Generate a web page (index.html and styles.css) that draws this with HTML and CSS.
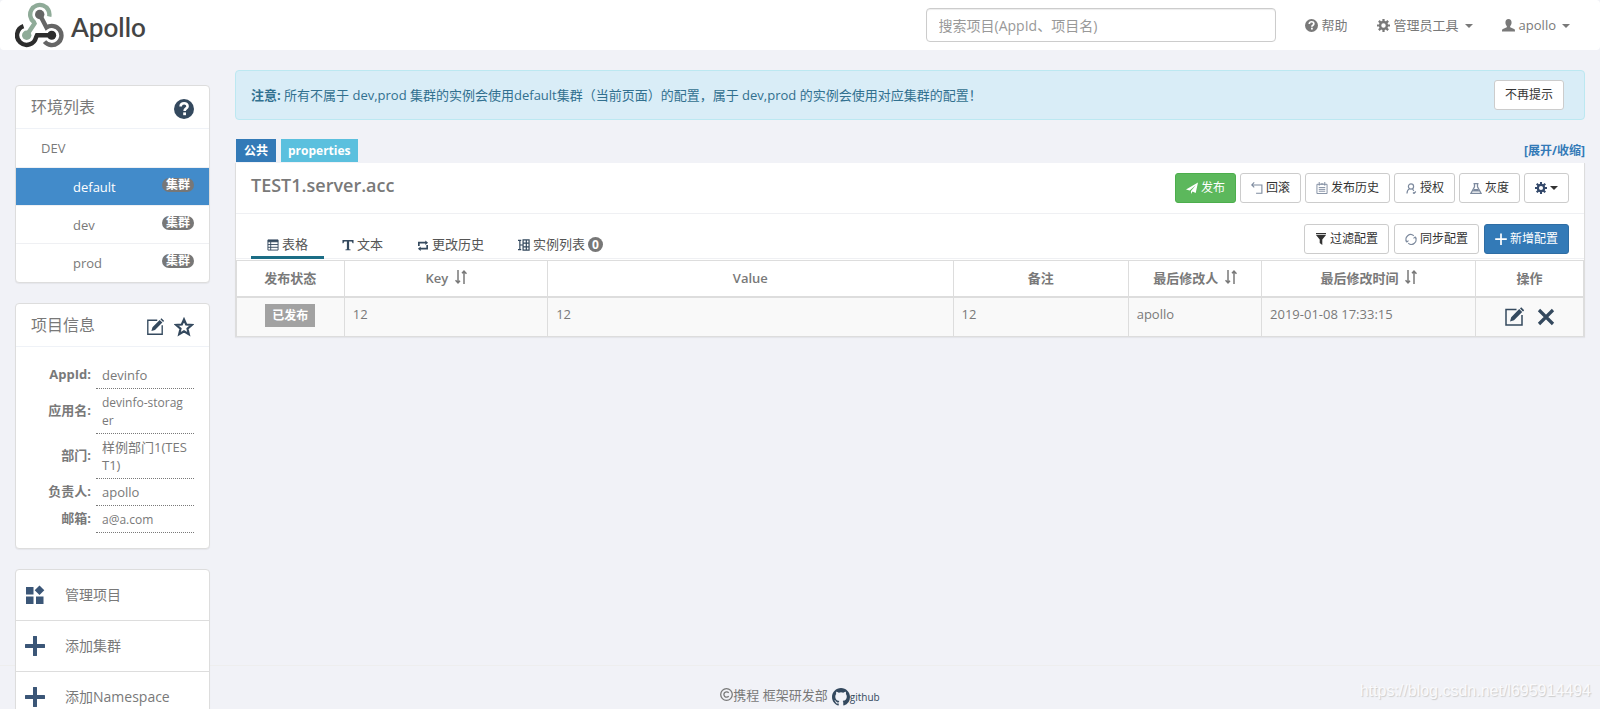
FILE: index.html
```html
<!DOCTYPE html>
<html lang="zh-CN">
<head>
<meta charset="utf-8">
<title>Apollo</title>
<link rel="stylesheet" href="styles.css">
</head>
<body>
<svg class="sprite" aria-hidden="true">
  <symbol id="help" viewBox="0 0 20 20"><circle cx="10" cy="10" r="10" fill="currentColor"/><path d="M6.600 7.600c0-2.200 1.500-3.400 3.500-3.400s3.500 1.200 3.500 3c0 2.300-3 2.500-3 4.700" fill="none" stroke="#fff" stroke-width="2.600"/><rect x="9.200" y="13.400" width="2.800" height="2.800" fill="#fff"/></symbol>
  <symbol id="edit" viewBox="0 0 20 20"><path d="M12.500 2.500H2v15.500h16V8" fill="none" stroke="currentColor" stroke-width="1.500"/><path d="M6 14.500l1.200-4.200 8-8.200 3 3-8.200 8.200zM16 1.400l1.200-1.200 3 3-1.200 1.200z" fill="currentColor"/></symbol>
  <symbol id="star" viewBox="0 0 20 20"><path d="M10 2.500l2.200 5 5.500.5-4.200 3.700 1.300 5.400-4.800-2.900-4.800 2.900 1.300-5.400L2.300 8l5.500-.5z" fill="none" stroke="currentColor" stroke-width="2.200"/></symbol>
  <symbol id="gear" viewBox="0 0 14 14"><circle cx="7" cy="7" r="3.700" fill="none" stroke="currentColor" stroke-width="2.600"/><path d="M7 0v3M7 11v3M0 7h3M11 7h3M2 2l2.200 2.200M9.800 9.800L12 12M12 2L9.800 4.200M4.200 9.800L2 12" stroke="currentColor" stroke-width="2.400"/></symbol>
  <symbol id="sort" viewBox="0 0 12 14"><path d="M3 0v12.500M.5 10.200L3 12.800 5 10.700M9 14V1.500M7 3.300L9 1.200l2.500 2.600" fill="none" stroke="currentColor" stroke-width="1.500"/></symbol>
  <symbol id="plus" viewBox="0 0 20 20"><path d="M10 1v18M1 10h18" stroke="currentColor" stroke-width="4" stroke-linecap="round"/></symbol>
</svg>
<div class="page">
  <header class="nav">
    <a class="brand" href="#">
      <svg class="brand-mark" viewBox="0 0 49 46" fill="none" stroke-width="4.400">
        <path d="M8.500 24.200A9.600 9.600 0 1 0 21 35.500L22 33.300H36.700" stroke="#2d2d2d"/><circle cx="36.700" cy="33.300" r="4.500" fill="#2d2d2d"/>
        <path d="M24.700 12.500L31.500 25.500A9.600 9.600 0 1 1 29.500 39.700" stroke="#656565"/><circle cx="24.700" cy="12.500" r="4.700" fill="#656565"/>
        <path d="M34.200 14.500A9.600 9.600 0 1 0 18.800 20L19.500 21.500 11.700 33.300" stroke="#8fab98"/><circle cx="11.700" cy="33.300" r="4.700" fill="#8fab98"/>
      </svg>
      <span class="brand-name">Apollo</span>
    </a>
    <div class="nav-right">
      <input class="search" type="text" aria-label="搜索项目" placeholder="搜索项目(AppId、项目名)">
      <a class="nav-link" href="#"><svg class="i13"><use href="#help"/></svg>帮助</a>
      <a class="nav-link" href="#"><svg class="i13"><use href="#gear"/></svg>管理员工具<span class="caret"></span></a>
      <a class="nav-link" href="#"><svg class="i13" viewBox="0 0 14 14"><path d="M7 0c2.200 0 3.300 1.500 3.300 3.700 0 1.800-.6 3-1.500 3.900v1.200l4.200 2c.8.400 1 1.200 1 2.700H0c0-1.500.2-2.300 1-2.700l4.200-2V7.600C4.300 6.700 3.700 5.500 3.700 3.700 3.700 1.500 4.800 0 7 0z" fill="currentColor"/></svg>apollo<span class="caret"></span></a>
    </div>
  </header>

  <div class="content">
    <aside class="sidebar">
      <section class="card">
        <div class="card-head"><h2>环境列表</h2><svg class="i20"><use href="#help"/></svg></div>
        <ul class="env">
          <li class="env-name">DEV</li>
          <li class="active">default<span class="badge">集群</span></li>
          <li>dev<span class="badge">集群</span></li>
          <li>prod<span class="badge">集群</span></li>
        </ul>
      </section>

      <section class="card">
        <div class="card-head"><h2>项目信息</h2><span class="head-icons"><svg class="i18"><use href="#edit"/></svg><svg class="i20"><use href="#star"/></svg></span></div>
        <table class="info">
          <tr><th>AppId:</th><td>devinfo</td></tr>
          <tr><th>应用名:</th><td class="small">devinfo-storager</td></tr>
          <tr><th>部门:</th><td>样例部门1(TEST1)</td></tr>
          <tr><th>负责人:</th><td>apollo</td></tr>
          <tr><th>邮箱:</th><td class="small">a@a.com</td></tr>
        </table>
      </section>

      <nav class="card actions">
        <a href="#"><svg class="i20" viewBox="0 0 20 20"><path d="M1 2h7.500v7.500H1zM1 11.500h7.500V19H1zM11 11.500h7.500V19H11zM14.500.500l4.800 4.800-4.800 4.800-4.800-4.800z" fill="currentColor"/></svg>管理项目</a>
        <a href="#"><svg class="i20"><use href="#plus"/></svg>添加集群</a>
        <a href="#"><svg class="i20"><use href="#plus"/></svg>添加Namespace</a>
      </nav>
    </aside>

    <main class="main">
      <div class="alert">
        <p><strong>注意:</strong> 所有不属于 dev,prod 集群的实例会使用default集群（当前页面）的配置，属于 dev,prod 的实例会使用对应集群的配置！</p>
        <button class="btn">不再提示</button>
      </div>

      <div class="labels">
        <span class="label primary">公共</span>
        <span class="label info-label">properties</span>
        <a class="toggle" href="#">[展开/收缩]</a>
      </div>

      <section class="namespace">
        <div class="ns-head">
          <h1>TEST1.server.acc</h1>
          <div class="btns">
            <button class="btn success"><svg class="i12" viewBox="0 0 12 12"><path d="M12 0.500L9.700 11 6.500 9.500 5 12V9L9.800 3.300 3.700 8.500 0 7.500z" fill="currentColor"/></svg>发布</button>
            <button class="btn"><svg class="i12 slate" viewBox="0 0 13 13"><path d="M3.500.500L.8 3.200l2.700 2.700M.8 3.200h11v9H5.500" fill="none" stroke="currentColor" stroke-width="1.200"/></svg>回滚</button>
            <button class="btn"><svg class="i12 slate" viewBox="0 0 13 13"><path d="M1 2.500h11v10H1zM3.500 0v4M9.500 0v4M3 6h7M3 8h7M3 10h7M5 2h3" fill="none" stroke="currentColor"/></svg>发布历史</button>
            <button class="btn"><svg class="i12 slate" viewBox="0 0 12 12"><circle cx="6" cy="4.500" r="2.600" fill="none" stroke="currentColor" stroke-width="1.200"/><path d="M2 11.500c0-2.300 1-4.100 2.600-4.700M7.500 7l1.300 1.800M8 10.500l1 1 1.800-2" fill="none" stroke="currentColor" stroke-width="1.200"/></svg>授权</button>
            <button class="btn"><svg class="i12 slate" viewBox="0 0 12 12"><path d="M3.500 1.600h5M4.500 2v2.800L1 11.300h10L7.500 4.800V2" fill="none" stroke="currentColor" stroke-width="1.300"/><path d="M4 7h4l1.500 2.500h-7z" fill="currentColor"/></svg>灰度</button>
            <button class="btn" aria-label="设置"><svg class="i12 navy"><use href="#gear"/></svg><span class="caret"></span></button>
          </div>
        </div>
        <div class="ns-tabs">
          <div class="tabs">
            <button class="tab on"><svg class="i12" viewBox="0 0 13 13"><path d="M1 1h11v11H1zM1 3h11M1 6h11M1 9h11M4 3v9" fill="none" stroke="currentColor"/><path d="M1 1h11v2H1z" fill="currentColor"/></svg>表格</button>
            <button class="tab"><svg class="i12" viewBox="0 0 13 13"><path d="M.5 1h12v3.500h-1L10.500 2.600H7.700V11l1.600.500v.8H3.700v-.8L5.300 11V2.600H2.500L1.500 4.500h-1z" fill="currentColor"/></svg>文本</button>
            <button class="tab"><svg class="i12" viewBox="0 0 13 13"><path d="M2 7.500V4H10M11 6.500v4H3" fill="none" stroke="currentColor" stroke-width="1.800"/><path d="M9 1.500L12 4 9 6.500zM4 8L1 10.500 4 13z" fill="currentColor"/></svg>更改历史</button>
            <button class="tab"><svg class="i12" viewBox="0 0 13 13"><path d="M5.500 1h6.500v11H5.500zM5.500 4.500H12M5.500 8.500H12M9 1v11M0 1.500h3.500M1.500 6.500h4M0 11.500h3.500M2 1.500v10" fill="none" stroke="currentColor" stroke-width="1.300"/></svg>实例列表<span class="count">0</span></button>
          </div>
          <div class="btns wide">
            <button class="btn"><svg class="i12" viewBox="0 0 12 12"><path d="M1 0h10v1.200H1zM1 2h10L7.300 6.500V12l-2.600-2V6.500z" fill="currentColor"/></svg>过滤配置</button>
            <button class="btn"><svg class="i12 slate" viewBox="0 0 13 13"><path d="M2 9.500A5 5 0 0 1 9.500 3M11 4.500A5 5 0 0 1 3.500 11M.5 8L2 9.800l1.800-1.500M9.200 5.800L11 4.300l1.500 1.700" fill="none" stroke="currentColor" stroke-width="1.200"/></svg>同步配置</button>
            <button class="btn blue"><svg class="i12" viewBox="0 0 12 12"><path d="M6 .5v11.500M.2 6.200h11.600" stroke="currentColor" stroke-width="1.700"/></svg>新增配置</button>
          </div>
        </div>
        <table class="items">
          <colgroup><col class="c-state"><col class="c-key"><col class="c-value"><col class="c-note"><col class="c-user"><col class="c-time"><col class="c-op"></colgroup>
          <thead><tr><th>发布状态</th><th>Key <svg class="sort"><use href="#sort"/></svg></th><th>Value</th><th>备注</th><th>最后修改人 <svg class="sort"><use href="#sort"/></svg></th><th>最后修改时间 <svg class="sort"><use href="#sort"/></svg></th><th>操作</th></tr></thead>
          <tbody><tr><td class="center"><span class="label muted">已发布</span></td><td>12</td><td>12</td><td>12</td><td>apollo</td><td>2019-01-08 17:33:15</td><td><div class="ops"><svg class="i20"><use href="#edit"/></svg><svg class="i20" viewBox="0 0 20 20"><path d="M3 3l14 14M17 3L3 17" stroke="currentColor" stroke-width="3.200"/></svg></div></td></tr></tbody>
        </table>
      </section>
    </main>
  </div>

  <footer class="footer">
    <svg class="i13" viewBox="0 0 13 13"><circle cx="6.500" cy="6.500" r="5.800" fill="none" stroke="currentColor" stroke-width="1.300"/><path d="M8.700 4.800a2.700 2.700 0 1 0 0 3.400" fill="none" stroke="currentColor" stroke-width="1.300"/></svg><span>携程 框架研发部</span>
    <a class="github" href="#"><svg class="i18" viewBox="0 0 16 16"><path fill="currentColor" d="M8 0C3.580 0 0 3.580 0 8c0 3.540 2.290 6.530 5.470 7.590.4.070.55-.17.55-.38v-1.490c-2.010.37-2.530-.49-2.690-.94-.09-.23-.48-.94-.82-1.130-.28-.15-.68-.52-.01-.53.63-.01 1.080.58 1.230.82.72 1.210 1.870.87 2.330.66.07-.52.28-.87.51-1.070-1.780-.2-3.640-.89-3.640-3.950 0-.87.31-1.590.82-2.150-.08-.2-.36-1.020.08-2.120 0 0 .67-.21 2.200.82a7.600 7.600 0 0 1 4 0c1.530-1.040 2.200-.82 2.200-.82.44 1.100.16 1.920.08 2.120.51.56.82 1.270.82 2.150 0 3.070-1.870 3.750-3.650 3.950.29.25.54.73.54 1.480v2.200c0 .21.15.46.55.38A8 8 0 0 0 16 8c0-4.420-3.580-8-8-8z"/></svg>github</a>
    <span class="watermark">https://blog.csdn.net/l695914494</span>
  </footer>
</div>
</body>
</html>
```
FILE: styles.css
```css
* { box-sizing: border-box; }
body {
  margin: 0;
  background: #f1f2f7;
  color: #797979;
  font: 13px/18px "Open Sans", "Noto Sans CJK SC", sans-serif;
}
h1, h2, p, ul { margin: 0; padding: 0; font-weight: 400; }
a { color: inherit; text-decoration: none; }
button, input { font: inherit; color: inherit; }
svg { flex: none; }
.sprite { display: none; }
.i12 { width: 12px; height: 12px; }
.i13 { width: 13px; height: 13px; }
.i18 { width: 18px; height: 18px; }
.i20 { width: 20px; height: 20px; }
.slate { color: #7d8a9e; }
.navy { color: #34496b; }

.page { display: flex; flex-direction: column; height: 100vh; overflow: hidden; }

.nav {
  display: flex;
  justify-content: space-between;
  align-items: center;
  height: 50px;
  flex: none;
  padding: 0 30px 0 15px;
  background: #fff;
  border-radius: 4px;
}
.brand { display: flex; align-items: center; gap: 7px; }
.brand-mark { width: 49px; height: 46px; }
.brand-name { font: 600 26px/46px Lato, sans-serif; color: #444; padding-top: 4px; }
.nav-right { display: flex; align-items: center; gap: 29px; }
.nav-link { display: flex; align-items: center; gap: 4px; }
.search {
  width: 350px;
  height: 34px;
  padding: 6px 12px;
  border: 1px solid #ccc;
  border-radius: 4px;
  background: #fff;
  box-shadow: inset 0 1px 1px rgba(0, 0, 0, .075);
  font-size: 14px;
}
.search::placeholder { color: #999; opacity: 1; }
.caret {
  border: 4px solid transparent;
  border-top-color: currentColor;
  border-bottom: 0;
}
.nav-link .caret { margin: 2px 0 0 2px; }

.content { display: flex; flex: 1; min-height: 0; gap: 25px; padding: 0 15px; }

.sidebar { position: relative; z-index: 1; width: 195px; flex: none; padding-top: 35px; }
.card {
  margin-bottom: 20px;
  border: 1px solid #ddd;
  border-radius: 4px;
  background: #fff;
  box-shadow: 0 1px 1px rgba(0, 0, 0, .05);
}
.card-head {
  display: flex;
  justify-content: space-between;
  align-items: center;
  height: 43px;
  padding: 3px 15px 0;
  border-bottom: 1px solid #eff2f7;
}
.card-head h2 { margin-bottom: 4px; font-size: 16px; line-height: 22px; }
.card-head svg { color: #34495e; }
.head-icons { display: flex; align-items: center; gap: 10px; }
.env { list-style: none; }
.env li {
  display: flex;
  justify-content: space-between;
  align-items: center;
  height: 38px;
  padding: 0 15px 0 57px;
  border-bottom: 1px solid #eff0f3;
}
.env li:last-child { border-bottom: 0; }
.env .env-name { height: 39px; padding-left: 25px; }
.env .active { background: #428bca; background-clip: padding-box; color: #fff; }
.badge {
  margin-bottom: 4px;
  padding: 0 4px;
  border-radius: 8px;
  background: #777;
  color: #fff;
  font-size: 12px;
  font-weight: 700;
  line-height: 14px;
}

.info { width: 178px; margin: 15px 15px 15px 0; border-spacing: 0; table-layout: fixed; }
.info th { width: 80px; padding: 2px 5px 6px 0; text-align: right; font-weight: 700; }
.info td {
  padding: 4px 6px;
  border-bottom: 1px dotted #797979;
  word-break: break-all;
}
.info .small { padding: 5px 6px 3px; font-size: 12px; }

.actions a {
  display: flex;
  align-items: center;
  gap: 20px;
  height: 51px;
  padding-left: 9px;
  border-bottom: 1px solid #ddd;
  font-size: 14px;
}
.actions svg { color: #3b5677; }

.main { flex: 1; min-width: 0; padding-top: 20px; }
.alert {
  display: flex;
  justify-content: space-between;
  align-items: center;
  height: 50px;
  padding: 0 20px 0 15px;
  border: 1px solid #bce8f1;
  border-radius: 4px;
  background: #d9edf7;
  color: #31708f;
}
.btn {
  display: inline-flex;
  align-items: center;
  gap: 3px;
  height: 30px;
  padding: 0 10px;
  border: 1px solid #ccc;
  border-radius: 3px;
  background: #fff;
  color: #333;
  font-size: 12px;
}
.btn.success { background: #5cb85c; border-color: #4cae4c; color: #fff; }
.btn.blue { background: #337ab7; border-color: #2e6da4; color: #fff; }
.btns { display: flex; gap: 4px; }
.btns.wide { gap: 5px; }

.labels { display: flex; gap: 5px; margin-top: 19px; padding-left: 1px; }
.label {
  display: inline-block;
  padding: 0 8px;
  color: #fff;
  font-size: 12px;
  font-weight: 700;
  line-height: 23px;
}
.primary { background: #337ab7; }
.info-label { padding: 0 7px; background: #5bc0de; }
.muted { padding: 0 7px; background: #a2a2a2; }
.toggle { margin-left: auto; color: #337ab7; font-size: 12px; font-weight: 700; line-height: 23px; }

.namespace {
  margin-top: 1px;
  border: 1px solid #ddd;
  border-top: 0;
  border-bottom: 0;
  background: #fff;
  box-shadow: 0 1px 1px rgba(0, 0, 0, .05);
}
.ns-head {
  display: flex;
  justify-content: space-between;
  height: 51px;
  padding: 10px 15px;
  border-bottom: 1px solid #eff0f3;
}
.ns-head h1 { font-size: 18px; font-weight: 600; line-height: 24px; }
.ns-tabs {
  display: flex;
  justify-content: space-between;
  height: 45px;
  padding: 0 15px;
  border-bottom: 1px solid #eff0f3;
}
.ns-tabs .btns { padding-top: 10px; height: 40px; }
.tabs { display: flex; gap: 2px; align-items: flex-end; margin-bottom: -1px; }
.tab {
  display: flex;
  align-items: center;
  gap: 3px;
  height: 32px;
  padding: 4px 16px 0;
  border: 0;
  border-bottom: 3px solid transparent;
  background: none;
  color: #555;
}
.tab svg { margin-top: 2px; color: #34495e; }
.tab.on { border-color: #1b6d85; }
.count {
  margin-top: 2px;
  padding: 0 4px;
  border-radius: 8px;
  background: #777;
  color: #fff;
  font-size: 12px;
  font-weight: 700;
  line-height: 15px;
}

.items { width: 100%; margin-top: 1px; border-collapse: collapse; table-layout: fixed; }
.c-state { width: 8%; }
.c-key { width: 15.1%; }
.c-value { width: 30.1%; }
.c-note { width: 13%; }
.c-user { width: 9.9%; }
.c-time { width: 15.9%; }
.c-op { width: 8%; }
.items th, .items td { border: 1px solid #ddd; padding: 8px; }
.items th { height: 36px; padding: 7px 8px 8px; border-bottom-width: 2px; font-weight: 600; }
.items td { height: 40px; padding-top: 7px; background: #f9f9f9; vertical-align: top; }
.items .center { text-align: center; padding: 6px 0; }
.sort { width: 12px; height: 14px; margin-left: 3px; vertical-align: -1px; }
.ops { display: flex; justify-content: center; gap: 12px; padding-top: 2px; color: #34495e; }

.footer {
  position: relative;
  display: flex;
  justify-content: center;
  align-items: center;
  height: 44px;
  flex: none;
  padding-top: 14px;
  border-top: 1px solid #eee;
}
.github { display: flex; align-items: center; margin: 4px 0 0 4px; color: #34495e; font-size: 10px; }
.watermark {
  position: absolute;
  right: 9px;
  bottom: 8px;
  color: #fafafc;
  font: 16px/20px "Liberation Sans", sans-serif;
  text-shadow: 1px 1px 1px #ccc;
}
```
